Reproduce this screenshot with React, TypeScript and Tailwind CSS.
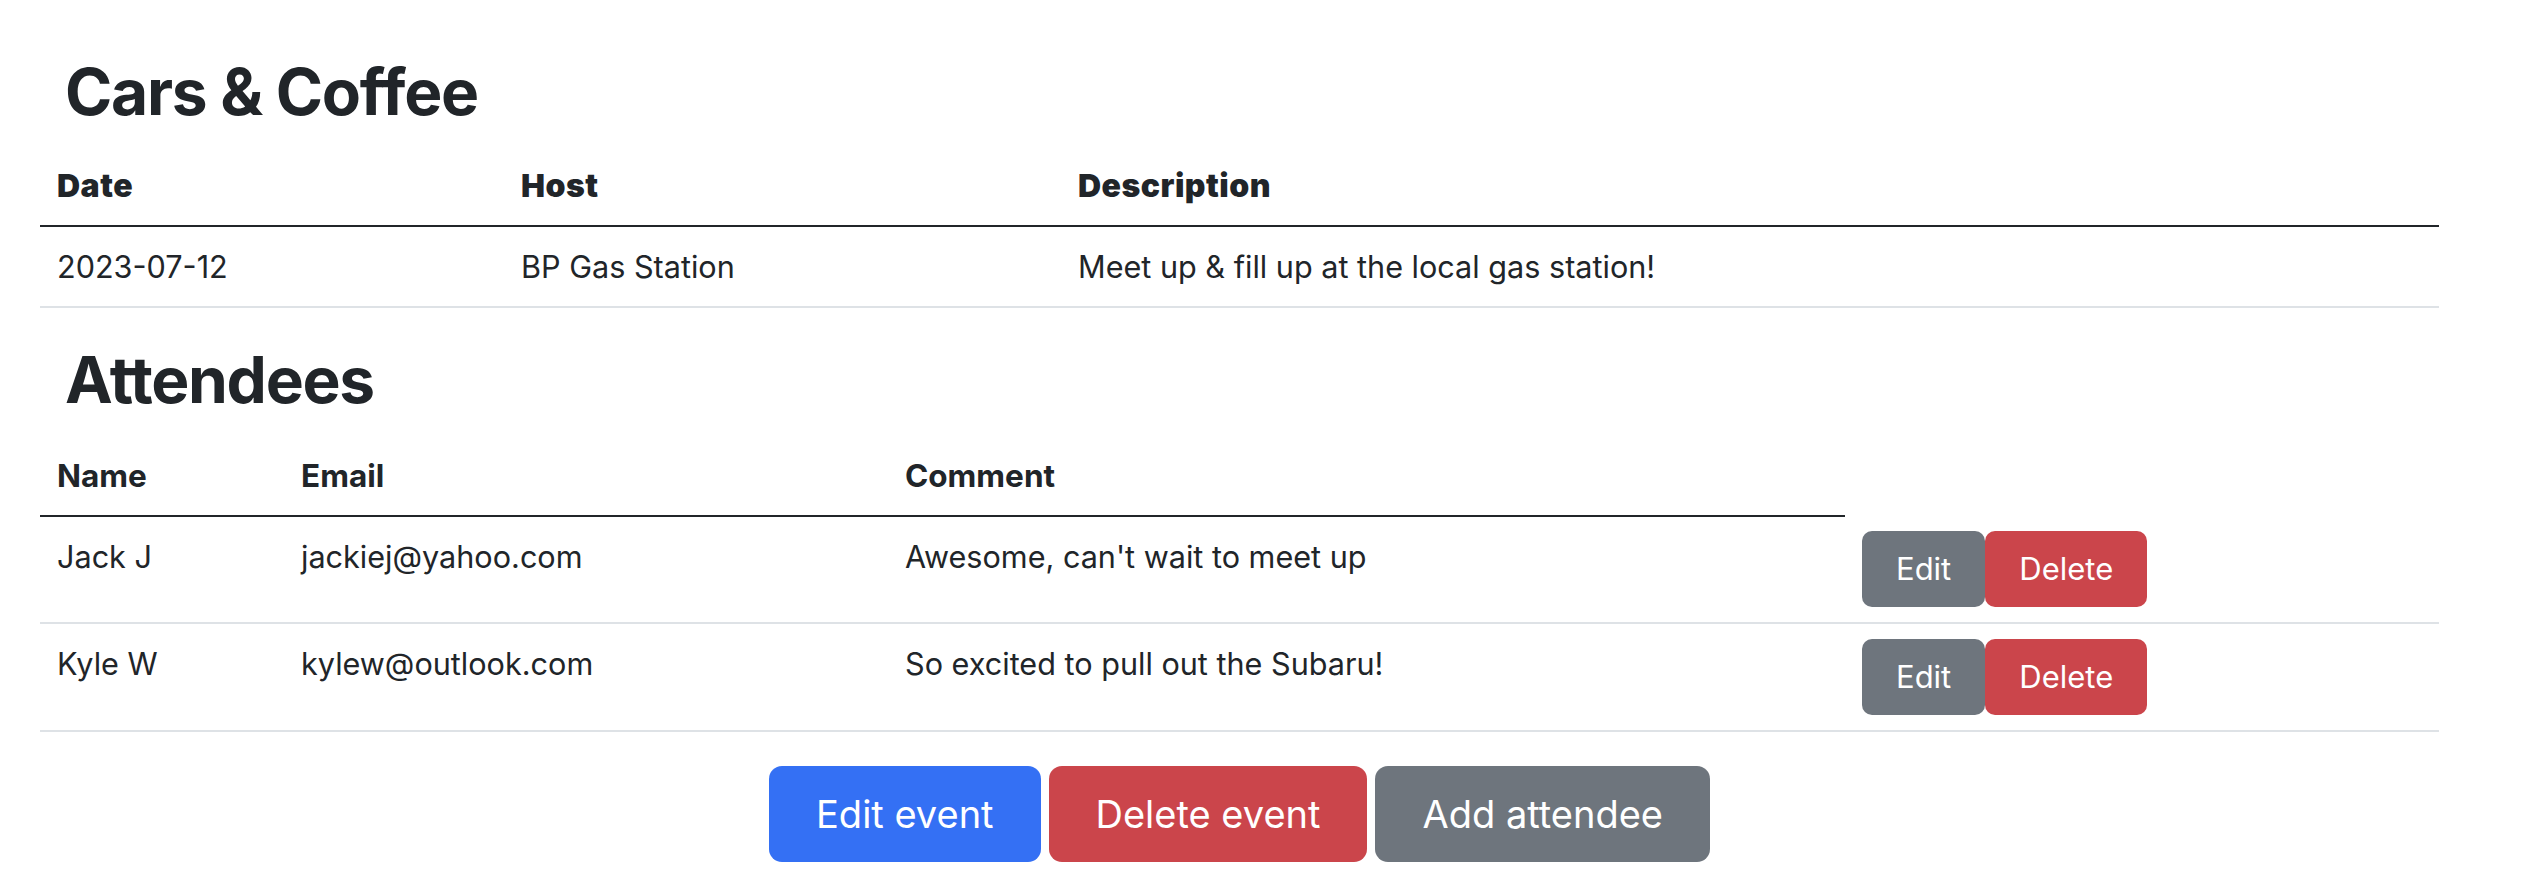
import React from 'react'

const attendees = [
  { name: 'Jack J', email: 'jackiej@yahoo.com', comment: "Awesome, can't wait to meet up" },
  { name: 'Kyle W', email: 'kylew@outlook.com', comment: 'So excited to pull out the Subaru!' },
]

const App = () => {
  return (
    <main className="min-h-screen bg-white text-[#212529] font-['Inter',sans-serif]">
      <div className="ml-[40px] w-[2399px] pt-[53px]">
        <h1 className="pl-[25px] text-[64px] leading-[77px] font-bold tracking-[-0.02em] mb-[16px]">Cars &amp; Coffee</h1>

        <table className="w-full table-fixed border-collapse text-[30.6px] leading-[45px] mb-[33px]">
          <colgroup>
            <col className="w-[464px]" />
            <col className="w-[557px]" />
            <col />
          </colgroup>
          <thead>
            <tr>
              <th className="text-left text-[32px] font-black tracking-[0.015em] px-[17px] py-[17px] border-b-2 border-[#212529]">Date</th>
              <th className="text-left text-[32px] font-black tracking-[0.015em] px-[17px] py-[17px] border-b-2 border-[#212529]">Host</th>
              <th className="text-left text-[32px] font-black tracking-[0.015em] px-[17px] py-[17px] border-b-2 border-[#212529]">Description</th>
            </tr>
          </thead>
          <tbody>
            <tr>
              <td className="align-top px-[17px] py-[17px] border-b-2 border-[#dee2e6]">2023-07-12</td>
              <td className="align-top px-[17px] py-[17px] border-b-2 border-[#dee2e6]">BP Gas Station</td>
              <td className="align-top px-[17px] py-[17px] border-b-2 border-[#dee2e6]">Meet up &amp; fill up at the local gas station!</td>
            </tr>
          </tbody>
        </table>

        <h2 className="pl-[25px] text-[64px] leading-[77px] font-bold tracking-[-0.02em] mb-[18px]">Attendees</h2>

        <table className="w-full table-fixed border-collapse text-[30.6px] leading-[45px] mb-[34px]">
          <colgroup>
            <col className="w-[244px]" />
            <col className="w-[604px]" />
            <col className="w-[957px]" />
            <col />
          </colgroup>
          <thead>
            <tr>
              <th className="text-left text-[31.5px] font-bold px-[17px] py-[17px] border-b-2 border-[#212529]">Name</th>
              <th className="text-left text-[31.5px] font-bold px-[17px] py-[17px] border-b-2 border-[#212529]">Email</th>
              <th className="text-left text-[31.5px] font-bold px-[17px] py-[17px] border-b-2 border-[#212529]">Comment</th>
            </tr>
          </thead>
          <tbody>
            {attendees.map((a) => (
              <tr key={a.email}>
                <td className="align-top px-[17px] py-[17px] border-b-2 border-[#dee2e6]">{a.name}</td>
                <td className="align-top px-[17px] py-[17px] border-b-2 border-[#dee2e6]">{a.email}</td>
                <td className="align-top px-[17px] py-[17px] border-b-2 border-[#dee2e6]">{a.comment}</td>
                <td className="align-top px-[17px] py-[15px] border-b-2 border-[#dee2e6]">
                  <div className="flex">
                    <button className="bg-[#6e757d] text-white text-[31px] rounded-[10px] px-[34px] py-[15px] leading-[46px]">Edit</button>
                    <button className="bg-[#cb454b] text-white text-[31px] rounded-[10px] px-[34px] py-[15px] leading-[46px]">Delete</button>
                  </div>
                </td>
              </tr>
            ))}
          </tbody>
        </table>

        <div className="flex justify-center gap-[8px]">
          <button className="bg-[#3470f4] text-white text-[38px] leading-[58px] px-[47px] py-[19px] rounded-[13px]">Edit event</button>
          <button className="bg-[#cb454b] text-white text-[38px] leading-[58px] px-[47px] py-[19px] rounded-[13px]">Delete event</button>
          <button className="bg-[#6e757d] text-white text-[38px] leading-[58px] px-[47px] py-[19px] rounded-[13px]">Add attendee</button>
        </div>
      </div>
    </main>
  )
}

export default App
